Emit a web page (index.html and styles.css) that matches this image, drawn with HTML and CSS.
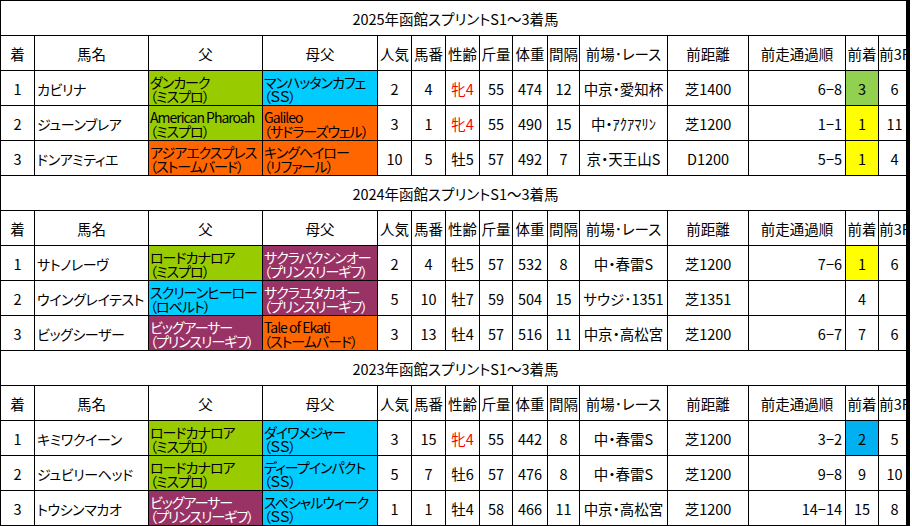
FILE: index.html
```html
<!DOCTYPE html>
<html lang="ja">
<head>
<meta charset="utf-8">
<title>函館スプリントS 1～3着馬</title>
<link rel="stylesheet" href="styles.css">
</head>
<body>
<div class="frame">
  <div class="sheet">
    <div class="grid">
      <div class="title">2025年函館スプリントS1～3着馬</div>
      <div class="c">着</div><div class="c">馬名</div><div class="c">父</div><div class="c">母父</div><div class="c">人気</div><div class="c">馬番</div><div class="c">性齢</div><div class="c">斤量</div><div class="c">体重</div><div class="c">間隔</div><div class="c">前場･レース</div><div class="c">前距離</div><div class="c">前走通過順</div><div class="c">前着</div><div class="c">前3F</div>

      <div class="c">1</div><div class="l">カビリナ</div>
      <div class="two green"><span>ダンカーク</span><span>（ミスプロ）</span></div>
      <div class="two sky"><span>マンハッタンカフェ</span><span>（ＳＳ）</span></div>
      <div class="c">2</div><div class="c">4</div><div class="c red">牝4</div><div class="c">55</div><div class="c">474</div><div class="c">12</div><div class="c">中京・愛知杯</div><div class="c">芝1400</div><div class="r">6−8</div><div class="c lime">3</div><div class="c">6</div>

      <div class="c">2</div><div class="l">ジューンブレア</div>
      <div class="two green"><span>American Pharoah</span><span>（ミスプロ）</span></div>
      <div class="two orange"><span>Galileo</span><span>（サドラーズウェル）</span></div>
      <div class="c">3</div><div class="c">1</div><div class="c red">牝4</div><div class="c">55</div><div class="c">490</div><div class="c">15</div><div class="c">中・ｱｸｱﾏﾘﾝ</div><div class="c">芝1200</div><div class="r">1−1</div><div class="c yellow">1</div><div class="c">11</div>

      <div class="c">3</div><div class="l">ドンアミティエ</div>
      <div class="two orange"><span>アジアエクスプレス</span><span>（ストームバード）</span></div>
      <div class="two orange"><span>キングヘイロー</span><span>（リファール）</span></div>
      <div class="c">10</div><div class="c">5</div><div class="c">牡5</div><div class="c">57</div><div class="c">492</div><div class="c">7</div><div class="c">京・天王山S</div><div class="c">D1200</div><div class="r">5−5</div><div class="c yellow">1</div><div class="c">4</div>

      <div class="title">2024年函館スプリントS1～3着馬</div>
      <div class="c">着</div><div class="c">馬名</div><div class="c">父</div><div class="c">母父</div><div class="c">人気</div><div class="c">馬番</div><div class="c">性齢</div><div class="c">斤量</div><div class="c">体重</div><div class="c">間隔</div><div class="c">前場･レース</div><div class="c">前距離</div><div class="c">前走通過順</div><div class="c">前着</div><div class="c">前3F</div>

      <div class="c">1</div><div class="l">サトノレーヴ</div>
      <div class="two green"><span>ロードカナロア</span><span>（ミスプロ）</span></div>
      <div class="two plum"><span>サクラバクシンオー</span><span>（プリンスリーギフ）</span></div>
      <div class="c">2</div><div class="c">4</div><div class="c">牡5</div><div class="c">57</div><div class="c">532</div><div class="c">8</div><div class="c">中・春雷S</div><div class="c">芝1200</div><div class="r">7−6</div><div class="c yellow">1</div><div class="c">6</div>

      <div class="c">2</div><div class="l">ウイングレイテスト</div>
      <div class="two sky"><span>スクリーンヒーロー</span><span>（ロベルト）</span></div>
      <div class="two plum"><span>サクラユタカオー</span><span>（プリンスリーギフ）</span></div>
      <div class="c">5</div><div class="c">10</div><div class="c">牡7</div><div class="c">59</div><div class="c">504</div><div class="c">15</div><div class="c">サウジ･1351</div><div class="c">芝1351</div><div class="r"></div><div class="c">4</div><div class="c"></div>

      <div class="c">3</div><div class="l">ビッグシーザー</div>
      <div class="two plum"><span>ビッグアーサー</span><span>（プリンスリーギフ）</span></div>
      <div class="two orange"><span>Tale of Ekati</span><span>（ストームバード）</span></div>
      <div class="c">3</div><div class="c">13</div><div class="c">牡4</div><div class="c">57</div><div class="c">516</div><div class="c">11</div><div class="c">中京・高松宮</div><div class="c">芝1200</div><div class="r">6−7</div><div class="c">7</div><div class="c">6</div>

      <div class="title">2023年函館スプリントS1～3着馬</div>
      <div class="c">着</div><div class="c">馬名</div><div class="c">父</div><div class="c">母父</div><div class="c">人気</div><div class="c">馬番</div><div class="c">性齢</div><div class="c">斤量</div><div class="c">体重</div><div class="c">間隔</div><div class="c">前場･レース</div><div class="c">前距離</div><div class="c">前走通過順</div><div class="c">前着</div><div class="c">前3F</div>

      <div class="c">1</div><div class="l">キミワクイーン</div>
      <div class="two green"><span>ロードカナロア</span><span>（ミスプロ）</span></div>
      <div class="two sky"><span>ダイワメジャー</span><span>（ＳＳ）</span></div>
      <div class="c">3</div><div class="c">15</div><div class="c red">牝4</div><div class="c">55</div><div class="c">442</div><div class="c">8</div><div class="c">中・春雷S</div><div class="c">芝1200</div><div class="r">3−2</div><div class="c blue">2</div><div class="c">5</div>

      <div class="c">2</div><div class="l">ジュビリーヘッド</div>
      <div class="two green"><span>ロードカナロア</span><span>（ミスプロ）</span></div>
      <div class="two sky"><span>ディープインパクト</span><span>（ＳＳ）</span></div>
      <div class="c">5</div><div class="c">7</div><div class="c">牡6</div><div class="c">57</div><div class="c">476</div><div class="c">8</div><div class="c">中・春雷S</div><div class="c">芝1200</div><div class="r">9−8</div><div class="c">9</div><div class="c">10</div>

      <div class="c">3</div><div class="l">トウシンマカオ</div>
      <div class="two plum"><span>ビッグアーサー</span><span>（プリンスリーギフ）</span></div>
      <div class="two sky"><span>スペシャルウィーク</span><span>（ＳＳ）</span></div>
      <div class="c">1</div><div class="c">1</div><div class="c">牡4</div><div class="c">58</div><div class="c">466</div><div class="c">11</div><div class="c">中京・高松宮</div><div class="c">芝1200</div><div class="r">14−14</div><div class="c">15</div><div class="c">8</div>
    </div>
  </div>
  <div class="edge"></div>
</div>
</body>
</html>
```

FILE: styles.css
```css
html, body {
  margin: 0;
  padding: 0;
  background: #fff;
}
body {
  font-family: "Noto Sans CJK JP", "Noto Sans", sans-serif;
  font-size: 14.5px;
  font-feature-settings: "palt";
  color: #000;
}
.frame {
  display: flex;
  height: 526px;
}
.sheet {
  width: 906px;
  height: 526px;
  overflow: hidden;
  flex: none;
}
.edge {
  width: 4px;
  height: 526px;
  background: #000;
  flex: none;
}
.grid {
  display: grid;
  width: max-content;
  grid-template-columns: 33px 113px 113px 114px 33px 33px 33px 32px 34px 31px 87px 80px 96px 32px 31px;
  grid-auto-rows: 34px;
  gap: 1px;
  padding: 1px 0 1px 1px;
  background: #000;
}
.grid > div {
  background: #fff;
  display: flex;
  align-items: center;
  white-space: nowrap;
  overflow: hidden;
  line-height: 16px;
  padding-top: 1px;
}
.grid > .title {
  grid-column: 1 / -1;
  justify-content: center;
}
.grid > .c { justify-content: center; }
.grid > .l {
  justify-content: flex-start;
  padding-left: 2px;
  font-size: 14px;
  letter-spacing: -0.4px;
}
.grid > .r { justify-content: flex-end; padding-right: 3px; }
.grid > .two {
  flex-direction: column;
  align-items: flex-start;
  justify-content: center;
  padding-left: 1px;
  font-size: 14px;
  line-height: 14px;
  letter-spacing: -1px;
}
.red { color: #ff0000; }
.grid > .green { background: #99cc00; }
.grid > .sky { background: #00ccff; }
.grid > .orange { background: #ff6600; }
.grid > .plum { background: #993366; color: #fff; }
.grid > .lime { background: #92d050; }
.grid > .yellow { background: #ffff00; }
.grid > .blue { background: #00b0f0; }
```
